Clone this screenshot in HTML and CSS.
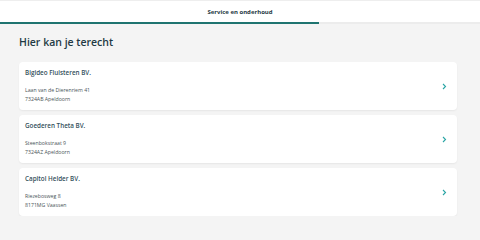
FILE: index.html
```html
<!DOCTYPE html>
<html lang="nl">
<head>
    <meta charset="UTF-8">
    <meta name="viewport" content="width=device-width, initial-scale=1.0">
    <title>Service en onderhoud</title>
    <link rel="stylesheet" href="styles.css">
</head>
<body>
    <div class="tabs">
        <div class="tab-label">Service en onderhoud</div>
        <div class="tab-track"><div class="tab-indicator"></div></div>
    </div>

    <main class="content">
        <h1>Hier kan je terecht</h1>

        <div class="card-list">
            <a class="card" href="#">
                <div class="card-text">
                    <div class="card-name">Bigideo Fluisteren BV.</div>
                    <div class="card-address">Laan van de Dierenriem 41</div>
                    <div class="card-address">7324AB Apeldoorn</div>
                </div>
                <svg class="chevron" width="5" height="7" viewBox="0 0 5 7"><path d="M1 1l2.5 2.5L1 6" fill="none" stroke="#2aa5a5" stroke-width="1.1"/></svg>
            </a>
            <a class="card" href="#">
                <div class="card-text">
                    <div class="card-name">Goederen Theta BV.</div>
                    <div class="card-address">Steenbokstraat 9</div>
                    <div class="card-address">7324AZ Apeldoorn</div>
                </div>
                <svg class="chevron" width="5" height="7" viewBox="0 0 5 7"><path d="M1 1l2.5 2.5L1 6" fill="none" stroke="#2aa5a5" stroke-width="1.1"/></svg>
            </a>
            <a class="card" href="#">
                <div class="card-text">
                    <div class="card-name">Capitol Helder BV.</div>
                    <div class="card-address">Riezebosweg 8</div>
                    <div class="card-address">8171MG Vaassen</div>
                </div>
                <svg class="chevron" width="5" height="7" viewBox="0 0 5 7"><path d="M1 1l2.5 2.5L1 6" fill="none" stroke="#2aa5a5" stroke-width="1.1"/></svg>
            </a>
        </div>
    </main>
</body>
</html>
```

FILE: styles.css
```css
body {
    font-family: "Open Sans", Arial, sans-serif;
    margin: 0;
    padding: 0;
    background-color: #f4f4f4;
    color: #1f3a44;
}

.tabs {
    background-color: #fff;
    border-top: 1px solid #eeeeee;
}

.tab-label {
    height: 21px;
    display: flex;
    align-items: center;
    justify-content: center;
    font-size: 6px;
    font-weight: 700;
    color: #1f3a44;
}

.tab-track {
    height: 2px;
    background-color: #ececec;
}

.tab-indicator {
    width: 319px;
    height: 2px;
    background-color: #1f7470;
}

.content {
    padding: 0 23px 0 19px;
}

h1 {
    margin: 0;
    padding-top: 11px;
    height: 27px;
    font-size: 10.5px;
    line-height: 14px;
    font-weight: 600;
    color: #1f3a44;
}

.card-list {
    display: flex;
    flex-direction: column;
    gap: 5px;
}

.card {
    display: flex;
    align-items: center;
    justify-content: space-between;
    height: 48px;
    box-sizing: border-box;
    padding: 6px 10px 6px 6px;
    background-color: #fff;
    border-radius: 4px;
    box-shadow: 0 1px 2px rgba(0, 0, 0, 0.06);
    text-decoration: none;
}

.card-name {
    font-size: 6.3px;
    line-height: 9px;
    font-weight: 600;
    color: #33505c;
    margin-bottom: 9px;
}

.card-address {
    font-size: 5.2px;
    line-height: 9px;
    color: #4a5558;
}

.chevron {
    display: block;
}
```
